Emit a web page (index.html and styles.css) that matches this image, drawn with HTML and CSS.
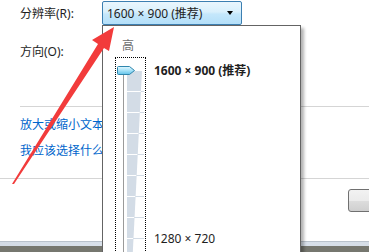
FILE: index.html
```html
<!DOCTYPE html>
<html lang="zh-CN">
<head>
  <meta charset="UTF-8">
  <title>屏幕分辨率</title>
  <link rel="stylesheet" href="styles.css">
</head>
<body>
  <div class="screen">
    <!-- 对话框主体 -->
    <div class="dialog">
      <div class="settings">
        <div class="field">
          <span class="label">分辨率(R):</span>
          <div class="select">
            <span>1600 × 900 (推荐)</span>
            <span class="caret"></span>
          </div>
        </div>
        <div class="field">
          <span class="label">方向(O):</span>
        </div>
        <hr class="rule">
        <a class="link" href="#">放大或缩小文本和其他项目</a>
        <a class="link" href="#">我应该选择什么显示器设置?</a>
      </div>
      <div class="footer">
        <button class="btn" aria-label="确定"></button>
      </div>
      <div class="frame"></div>
    </div>

    <!-- 分辨率下拉滑块 -->
    <div class="popup">
      <div class="high">高</div>
      <div class="scale-row">
        <div class="slider">
          <svg width="29" height="220" viewBox="0 0 29 220">
            <defs>
              <linearGradient id="thumb" x1="0" y1="0" x2="0" y2="1">
                <stop offset="0" stop-color="#e4f8ff"/>
                <stop offset="0.5" stop-color="#a6e2f8"/>
                <stop offset="1" stop-color="#5fc2ea"/>
              </linearGradient>
            </defs>
            <polygon points="11,12 26,12 15.5,220 11,220" fill="#d3dce6"/>
            <g stroke-width="1">
              <line x1="11" y1="12.5" x2="26" y2="12.5" stroke="#fff"/>
              <line x1="11" y1="33.5" x2="24.9" y2="33.5" stroke="#fff"/>
              <line x1="24.9" y1="33.5" x2="28" y2="33.5" stroke="#d3dce6"/>
              <line x1="11" y1="54.5" x2="23.8" y2="54.5" stroke="#fff"/>
              <line x1="23.8" y1="54.5" x2="28" y2="54.5" stroke="#d3dce6"/>
              <line x1="11" y1="75.5" x2="22.6" y2="75.5" stroke="#fff"/>
              <line x1="22.6" y1="75.5" x2="28" y2="75.5" stroke="#d3dce6"/>
              <line x1="11" y1="96.5" x2="21.5" y2="96.5" stroke="#fff"/>
              <line x1="21.5" y1="96.5" x2="28" y2="96.5" stroke="#d3dce6"/>
              <line x1="11" y1="117.5" x2="20.4" y2="117.5" stroke="#fff"/>
              <line x1="20.4" y1="117.5" x2="28" y2="117.5" stroke="#d3dce6"/>
              <line x1="11" y1="138.5" x2="19.3" y2="138.5" stroke="#fff"/>
              <line x1="19.3" y1="138.5" x2="28" y2="138.5" stroke="#d3dce6"/>
              <line x1="11" y1="159.5" x2="18.2" y2="159.5" stroke="#fff"/>
              <line x1="18.2" y1="159.5" x2="28" y2="159.5" stroke="#d3dce6"/>
              <line x1="11" y1="180.5" x2="17.1" y2="180.5" stroke="#fff"/>
              <line x1="17.1" y1="180.5" x2="28" y2="180.5" stroke="#d3dce6"/>
            </g>
            <line x1="7.5" y1="16" x2="7.5" y2="220" stroke="#9a9a9a"/>
            <path d="M2.5,8.5 H13.5 L18.5,12.5 L13.5,16.5 H2.5 Q1.5,16.5 1.5,15.5 V9.5 Q1.5,8.5 2.5,8.5 Z" fill="url(#thumb)" stroke="#2f86ad"/>
          </svg>
        </div>
        <div class="scale">
          <span class="tick current">1600 × 900 (推荐)</span>
          <span class="tick bottom">1280 × 720</span>
        </div>
      </div>
    </div>

    <!-- 红色箭头标注 -->
    <svg class="arrow" width="369" height="252" viewBox="0 0 369 252">
      <polygon points="114,27 109,51 104,48 14,184 12,184 98,44 92,40" fill="#f23b3b"/>
    </svg>
  </div>
</body>
</html>
```

FILE: styles.css
```css
/* 基本样式 */
body {
  margin: 0;
  font-family: "Noto Sans", "Noto Sans CJK SC", sans-serif;
  font-size: 12px;
  color: #1e1e1e;
  background: #fff;
  overflow: hidden;
}

.screen {
  position: relative;
  width: 369px;
  height: 252px;
  overflow: hidden;
}

/* 对话框 */
.dialog {
  width: 440px;
  height: 252px;
  display: flex;
  flex-direction: column;
}

.settings {
  padding: 1px 0 0 20px;
}

.field {
  display: flex;
  align-items: center;
  height: 24px;
}

.field + .field {
  margin-top: 14px;
}

.label {
  width: 82px;
}

.select {
  box-sizing: border-box;
  width: 140px;
  height: 24px;
  display: flex;
  align-items: center;
  padding: 0 4px;
  border: 1px solid #3c7fb1;
  border-radius: 2px;
  background: linear-gradient(#eaf6fd 0%, #d9f0fc 45%, #c4e7fb 55%, #b4dff9 100%);
}

.caret {
  margin-left: auto;
  margin-right: 4px;
  border-left: 3.5px solid transparent;
  border-right: 3.5px solid transparent;
  border-top: 4px solid #000;
}

.rule {
  margin: 43px 0 0;
  border: 0;
  border-top: 1px solid #d5d5d5;
}

.link {
  display: block;
  line-height: 26px;
  color: #0066cc;
  text-decoration: none;
  white-space: nowrap;
}

.rule + .link {
  margin-top: 5px;
}

/* 按钮区 */
.footer {
  flex: 1;
  margin-top: 14px;
  border-top: 1px solid #d5d5d5;
  display: flex;
  justify-content: flex-end;
  align-items: flex-start;
  padding: 10px 17px 0 0;
}

.btn {
  width: 75px;
  height: 23px;
  border: 1px solid #707070;
  border-radius: 3px;
  background: linear-gradient(#f2f2f2 0%, #ebebeb 50%, #dddddd 51%, #cfcfcf 100%);
}

.frame {
  height: 4px;
  border-top: 1px solid #b9c2cc;
  border-bottom: 6px solid #76776f;
  background: linear-gradient(90deg, #d3dbe5, #dde5ee 40%, #d3dbe5);
}

/* 下拉滑块 */
.popup {
  position: absolute;
  left: 102px;
  top: 25px;
  width: 199px;
  height: 260px;
  border: 1px solid #646464;
  background: #fff;
  box-shadow: 3px 3px 3px rgba(0, 0, 0, 0.3);
  padding: 12px 0 0 12px;
  box-sizing: border-box;
}

.high {
  margin-left: 7px;
  line-height: 16px;
  color: #6d6d6d;
}

.scale-row {
  display: flex;
  margin-top: 3px;
}

.slider {
  width: 29px;
  height: 220px;
  border: 1px dotted #000;
}

.slider svg {
  display: block;
}

.scale {
  margin-left: 8px;
  padding-top: 3px;
  display: grid;
  grid-template-rows: repeat(9, 21px);
}

.tick {
  line-height: 21px;
  white-space: nowrap;
}

.tick.current {
  grid-row: 1;
  font-weight: bold;
}

.tick.bottom {
  grid-row: 9;
}

/* 标注箭头 */
.arrow {
  position: absolute;
  left: 0;
  top: 0;
  pointer-events: none;
}
```
